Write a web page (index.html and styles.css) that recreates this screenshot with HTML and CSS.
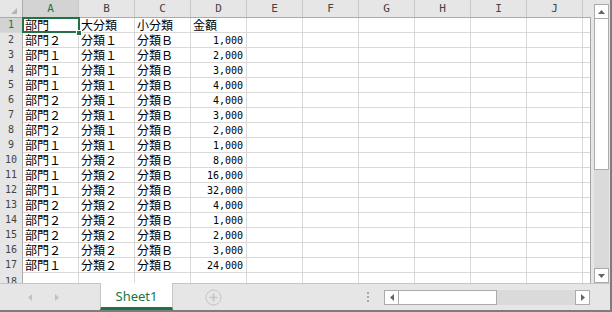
FILE: index.html
```html
<!DOCTYPE html>
<html lang="ja">
<head>
    <meta charset="UTF-8">
    <title>Sheet1</title>
    <link rel="stylesheet" href="styles.css">
</head>
<body>
    <div class="window">
        <div class="main">
            <div class="sheet">
                <div class="colhead">
                    <div class="corner">
                        <svg width="6" height="6" viewBox="0 0 6 6"><path d="M6 0V6H0Z" fill="#b4b4b4"/></svg>
                    </div>
                    <div class="ch sel">A</div>
                    <div class="ch">B</div>
                    <div class="ch">C</div>
                    <div class="ch">D</div>
                    <div class="ch">E</div>
                    <div class="ch">F</div>
                    <div class="ch">G</div>
                    <div class="ch">H</div>
                    <div class="ch">I</div>
                    <div class="ch">J</div>
                    <div class="ch last"></div>
                </div>
                <div class="rows">
                    <div class="row"><div class="rh sel">1</div><div class="c active">部門</div><div class="c">大分類</div><div class="c">小分類</div><div class="c">金額</div></div>
                    <div class="row"><div class="rh">2</div><div class="c">部門２</div><div class="c">分類１</div><div class="c">分類Ｂ</div><div class="n">1,000</div></div>
                    <div class="row"><div class="rh">3</div><div class="c">部門１</div><div class="c">分類１</div><div class="c">分類Ｂ</div><div class="n">2,000</div></div>
                    <div class="row"><div class="rh">4</div><div class="c">部門１</div><div class="c">分類１</div><div class="c">分類Ｂ</div><div class="n">3,000</div></div>
                    <div class="row"><div class="rh">5</div><div class="c">部門１</div><div class="c">分類１</div><div class="c">分類Ｂ</div><div class="n">4,000</div></div>
                    <div class="row"><div class="rh">6</div><div class="c">部門２</div><div class="c">分類１</div><div class="c">分類Ｂ</div><div class="n">4,000</div></div>
                    <div class="row"><div class="rh">7</div><div class="c">部門２</div><div class="c">分類１</div><div class="c">分類Ｂ</div><div class="n">3,000</div></div>
                    <div class="row"><div class="rh">8</div><div class="c">部門２</div><div class="c">分類１</div><div class="c">分類Ｂ</div><div class="n">2,000</div></div>
                    <div class="row"><div class="rh">9</div><div class="c">部門１</div><div class="c">分類１</div><div class="c">分類Ｂ</div><div class="n">1,000</div></div>
                    <div class="row"><div class="rh">10</div><div class="c">部門１</div><div class="c">分類２</div><div class="c">分類Ｂ</div><div class="n">8,000</div></div>
                    <div class="row"><div class="rh">11</div><div class="c">部門１</div><div class="c">分類２</div><div class="c">分類Ｂ</div><div class="n">16,000</div></div>
                    <div class="row"><div class="rh">12</div><div class="c">部門１</div><div class="c">分類２</div><div class="c">分類Ｂ</div><div class="n">32,000</div></div>
                    <div class="row"><div class="rh">13</div><div class="c">部門２</div><div class="c">分類２</div><div class="c">分類Ｂ</div><div class="n">4,000</div></div>
                    <div class="row"><div class="rh">14</div><div class="c">部門２</div><div class="c">分類２</div><div class="c">分類Ｂ</div><div class="n">1,000</div></div>
                    <div class="row"><div class="rh">15</div><div class="c">部門２</div><div class="c">分類２</div><div class="c">分類Ｂ</div><div class="n">2,000</div></div>
                    <div class="row"><div class="rh">16</div><div class="c">部門２</div><div class="c">分類２</div><div class="c">分類Ｂ</div><div class="n">3,000</div></div>
                    <div class="row"><div class="rh">17</div><div class="c">部門１</div><div class="c">分類２</div><div class="c">分類Ｂ</div><div class="n">24,000</div></div>
                    <div class="row short"><div class="rh">18</div></div>
                </div>
            </div>
            <div class="vscroll">
                <div class="sbtn">
                    <svg width="7" height="4" viewBox="0 0 7 4"><path d="M0 4H7L3.5 0Z" fill="#666"/></svg>
                </div>
                <div class="vthumb"></div>
                <div class="track"></div>
                <div class="sbtn">
                    <svg width="7" height="4" viewBox="0 0 7 4"><path d="M0 0H7L3.5 4Z" fill="#666"/></svg>
                </div>
            </div>
        </div>
        <div class="tabbar">
            <div class="nav">
                <svg width="4" height="7" viewBox="0 0 4 7"><path d="M4 0V7L0 3.5Z" fill="#c2c2c2"/></svg>
                <svg width="4" height="7" viewBox="0 0 4 7"><path d="M0 0V7L4 3.5Z" fill="#c2c2c2"/></svg>
            </div>
            <div class="tab">Sheet1</div>
            <div class="add">
                <svg width="17" height="17" viewBox="0 0 17 17">
                    <circle cx="8.5" cy="8.5" r="7.5" fill="none" stroke="#c4c4c4"/>
                    <path d="M8.5 4.5V12.5M4.5 8.5H12.5" stroke="#c4c4c4" stroke-width="1.6"/>
                </svg>
            </div>
            <div class="split">
                <svg width="2" height="10" viewBox="0 0 2 10">
                    <rect y="0" width="2" height="2" fill="#a8a8a8"/>
                    <rect y="4" width="2" height="2" fill="#a8a8a8"/>
                    <rect y="8" width="2" height="2" fill="#a8a8a8"/>
                </svg>
            </div>
            <div class="hscroll">
                <div class="sbtn">
                    <svg width="4" height="7" viewBox="0 0 4 7"><path d="M4 0V7L0 3.5Z" fill="#666"/></svg>
                </div>
                <div class="hthumb"></div>
                <div class="track"></div>
                <div class="sbtn">
                    <svg width="4" height="7" viewBox="0 0 4 7"><path d="M0 0V7L4 3.5Z" fill="#666"/></svg>
                </div>
            </div>
        </div>
    </div>
</body>
</html>
```

FILE: styles.css
```css
* {
    box-sizing: border-box;
    margin: 0;
    padding: 0;
}

body {
    background-color: #fff;
    font-family: "Noto Sans CJK JP", sans-serif;
    color: #000;
}

.window {
    width: 612px;
    height: 312px;
    border-right: 2px solid #7d7d7d;
    border-bottom: 2px solid #7d7d7d;
    background-color: #e6e6e6;
    display: flex;
    flex-direction: column;
    overflow: hidden;
}

.main {
    display: flex;
    height: 283px;
}

/* grid pane */
.sheet {
    width: 591px;
}

.colhead {
    display: grid;
    grid-template-columns: 23px repeat(10, 56px) 8px;
    height: 18px;
    border-bottom: 1px solid #ababab;
    background-color: #e6e6e6;
}

.corner {
    display: flex;
    justify-content: flex-end;
    align-items: flex-end;
    padding: 0 5px 3px 0;
    border-right: 1px solid #ababab;
}

.ch {
    border-right: 1px solid #c8c8c8;
    text-align: center;
    font-family: "DejaVu Sans Mono", monospace;
    font-size: 11px;
    line-height: 17px;
    color: #444;
}

.ch.last {
    border-right: none;
}

.ch.sel {
    background-color: #d3d3d3;
    color: #217346;
}

.rows {
    height: 265px;
    border-right: 1px solid #a6a6a6;
    background-color: #fff;
    background-image: linear-gradient(to left, #d9d9d9 1px, transparent 1px);
    background-size: 56px 100%;
    background-position: 23px 0;
}

.row {
    display: grid;
    grid-template-columns: 23px repeat(4, 56px);
    height: 15px;
    border-bottom: 1px solid #d9d9d9;
}

.row.short {
    height: 10px;
    border-bottom: none;
    overflow: hidden;
}

.rh {
    background-color: #e6e6e6;
    border-right: 1px solid #ababab;
    text-align: center;
    font-family: "DejaVu Sans Mono", monospace;
    font-size: 10px;
    line-height: 14px;
    color: #444;
}

.row.short .rh {
    padding-top: 2px;
}

.rh.sel {
    background-color: #d3d3d3;
    color: #217346;
}

.c {
    padding-left: 2px;
    font-size: 12px;
    line-height: 14px;
    white-space: nowrap;
}

.c.active {
    position: relative;
    outline: 2px solid #217346;
    outline-offset: -1px;
    z-index: 1;
}

.c.active::after {
    content: "";
    position: absolute;
    right: -3px;
    bottom: -4px;
    width: 4px;
    height: 4px;
    border: 1px solid #fff;
    background-color: #217346;
}

.n {
    padding-right: 4px;
    text-align: right;
    font-family: "DejaVu Sans Mono", monospace;
    font-size: 10px;
    line-height: 14px;
    padding-top: 1px;
}

/* scroll bars */
.sbtn {
    width: 15px;
    height: 15px;
    border: 1px solid #ababab;
    background-color: #fff;
    display: flex;
    justify-content: center;
    align-items: center;
    flex-shrink: 0;
}

.track {
    flex: 1;
    background-color: #dadada;
}

.vscroll {
    width: 19px;
    padding: 4px 1px 0 3px;
    display: flex;
    flex-direction: column;
}

.vthumb {
    height: 151px;
    border: 1px solid #ababab;
    border-top: none;
    background-color: #fff;
}

.hscroll {
    width: 206px;
    height: 15px;
    margin-top: 6px;
    display: flex;
}

.hthumb {
    width: 98px;
    border: 1px solid #ababab;
    border-left: none;
    background-color: #fff;
}

/* sheet tabs */
.tabbar {
    display: flex;
    height: 27px;
    border-top: 1px solid #c6c6c6;
}

.nav {
    width: 100px;
    display: flex;
    align-items: center;
    gap: 23px;
    padding-left: 28px;
}

.tab {
    width: 73px;
    margin-top: -1px;
    padding-top: 2px;
    border-left: 1px solid #c6c6c6;
    border-right: 1px solid #c6c6c6;
    border-bottom: 3px solid #217346;
    background-color: #fff;
    display: flex;
    justify-content: center;
    align-items: center;
    font-family: "Noto Sans", sans-serif;
    font-size: 13px;
    color: #217346;
}

.add {
    width: 60px;
    display: flex;
    align-items: center;
    padding-left: 32px;
}

.split {
    width: 151px;
    display: flex;
    justify-content: flex-end;
    align-items: center;
    padding-right: 15px;
}
```
